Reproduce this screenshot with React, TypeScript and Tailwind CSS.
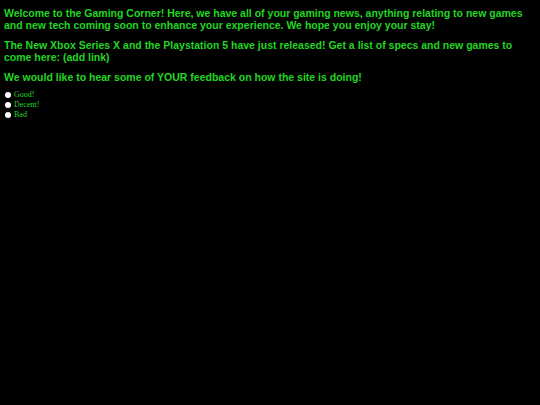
import React from 'react';

const paragraphs = [
  'Welcome to the Gaming Corner! Here, we have all of your gaming news, anything relating to new games and new tech coming soon to enhance your experience. We hope you enjoy your stay!',
  'The New Xbox Series X and the Playstation 5 have just released! Get a list of specs and new games to come here: (add link)',
  'We would like to hear some of YOUR feedback on how the site is doing!',
];

const options = ['Good!', 'Decent!', 'Bad'];

export default function App() {
  return (
    <div className="min-h-[405px] w-full bg-black px-[4px] pt-[7px] text-[#22d622]">
      {paragraphs.map((p) => (
        <p
          key={p}
          className="mb-[8px] text-[10.5px] font-bold leading-[12px] font-['Liberation_Sans',Arial,sans-serif]"
        >
          {p}
        </p>
      ))}
      <div className="-mt-[1px] flex flex-col font-['Liberation_Serif','Times_New_Roman',serif] text-[8px] leading-[10px]">
        {options.map((o) => (
          <label key={o} className="flex items-center gap-[3px]">
            <span className="ml-[1px] inline-block h-[6px] w-[6px] rounded-full bg-white" />
            <span>{o}</span>
          </label>
        ))}
      </div>
    </div>
  );
}
